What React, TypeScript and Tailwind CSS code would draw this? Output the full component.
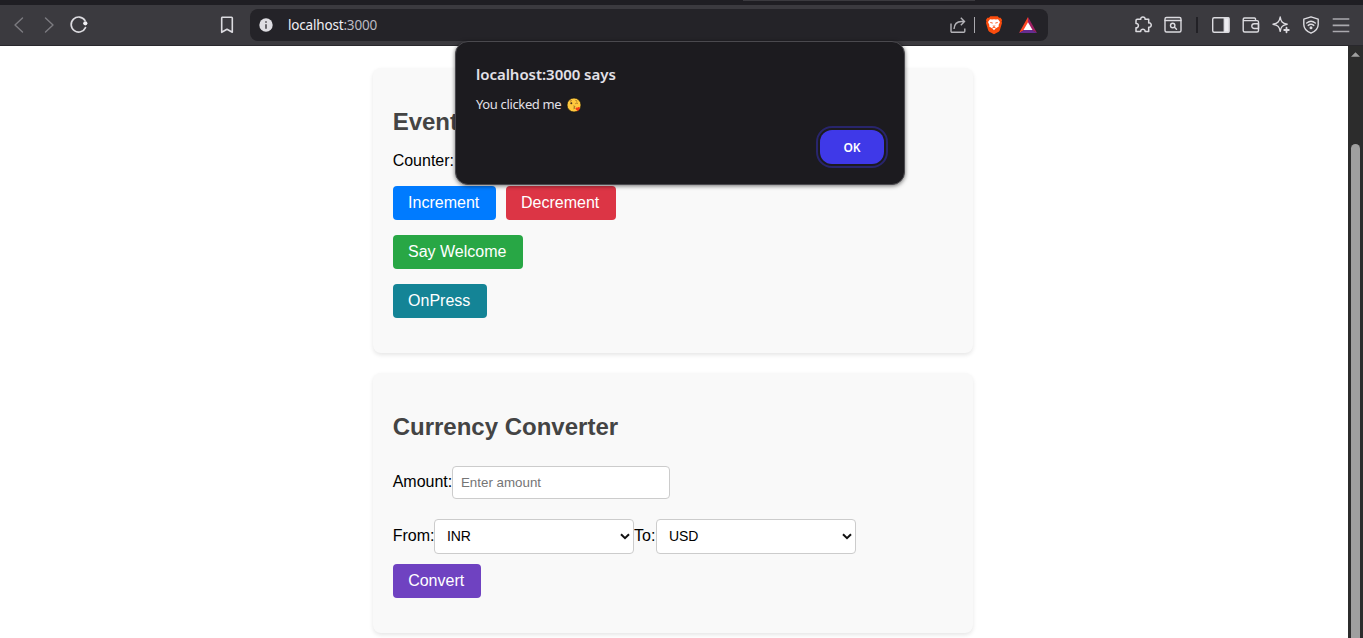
import React from "react";

const line = { fill: "none", stroke: "#dcdbe0", strokeWidth: 1.4, strokeLinecap: "round", strokeLinejoin: "round" } as const;

function Icon({ children, className = "" }: { children: React.ReactNode; className?: string }) {
  return (
    <svg viewBox="0 0 20 20" className={`size-5 shrink-0 ${className}`} {...line}>
      {children}
    </svg>
  );
}

function Toolbar() {
  return (
    <header className="h-[46px] shrink-0 border-b border-[#29282d] bg-[#3b3a3f] font-['Noto_Sans',sans-serif]">
      <div className="flex h-[5px] bg-[#1f1e23]">
        <div className="ml-[743px] h-px w-[232px] bg-[#3b3a3f]" />
      </div>
      <div className="flex h-10 items-center">
        <Icon className="ml-[9px]"><path stroke="#7c7b80" d="M13.5 3 6 10l7.500 7" /></Icon>
        <Icon className="ml-[10px]"><path stroke="#7c7b80" d="m6.500 3 7.500 7-7.500 7" /></Icon>
        <Icon className="ml-[10px]">
          <path strokeWidth="1.700" d="M16.500 12.600A7.500 7.500 0 1 1 16 5.500" />
          <circle cx="16.300" cy="8.300" r="2.100" fill="#f1f0f4" stroke="none" />
        </Icon>
        <Icon className="ml-[128px]"><path strokeWidth="1.600" d="M5 2.300h9.500a.8.8 0 0 1 .8.8v14.200L10 14.200l-5.300 3.100V3.100z" /></Icon>
        <div className="ml-[13px] flex h-8 w-[798px] items-center rounded-lg bg-[#242328]">
          <svg viewBox="0 0 14 14" className="ml-[9px] size-[14px]">
            <circle cx="7" cy="7" r="6.700" fill="#dedde2" />
            <path d="M7 3.300v1.500M7 6.200v4.500" stroke="#4b4a4f" strokeWidth="1.600" />
          </svg>
          <div className="ml-[15px] w-[100px] whitespace-nowrap text-[13.500px] leading-5 tracking-[-0.18px] text-[#f0eff4]">
            localhost<span className="text-[#bcbac2]">:3000</span>
          </div>
          <svg viewBox="0 0 18 18" className="ml-[561px] size-[18px]" fill="none" stroke="#b4b3b8" strokeWidth="1.400">
            <path d="M2 7.500v7.700a1 1 0 0 0 1 1h11.800a1 1 0 0 0 1-1V12.500" />
            <path d="M5 13c.3-4.800 3-7.500 7.500-7.500H15M11.800 1.800l3.700 3.700-3.700 3.700" />
          </svg>
          <div className="ml-[7px] h-4 w-px bg-[#aaa9ae]" />
          <svg viewBox="0 0 18 20" className="ml-[10px] h-5 w-[18px]">
            <path d="M5.300 1.200h7.400l1.300 1.500h1.600l1.500 2.300-.5 1.500.4 1.400-2.100 7.200a3 3 0 0 1-1.200 1.600L9 19.200l-4.700-2.500a3 3 0 0 1-1.200-1.600L1 7.900l.4-1.400L.9 5l1.500-2.300H4z" fill="#fb4c0d" />
            <path d="m5 4.200 2.200.4L9 4.300l1.800.3 2.200-.4L15 7l-1.400 3 .2 1.600-3.200 2L9 15.200l-1.600-1.600-3.200-2 .2-1.600L3 7z" fill="#fff" />
            <path d="m5.300 7.500 2.400.6M12.700 7.500l-2.400.6M7.800 10.800l1.200.6 1.200-.6M7.300 13l1.700-.8 1.700.8" fill="none" stroke="#fb4c0d" strokeWidth=".9" />
          </svg>
          <svg viewBox="0 0 18 16" className="ml-[16px] h-4 w-[18px]">
            <path d="M9 0 0 16l9-5z" fill="#ff4724" />
            <path d="m9 0 9 16-9-5z" fill="#9e1f63" />
            <path d="M0 16h18l-5-3H5z" fill="#662d91" />
            <path d="m9 5.200 4.500 7.800h-9z" fill="#fff" />
          </svg>
        </div>
        <Icon className="ml-[85px]">
          <path strokeWidth="1.500" d="M4.200 4.200h3.600c-.6-3 4.800-3 4.200 0h3.700v3.700c3.400-.5 3.400 4.900 0 4.300v4.300h-3.600c.2-3-4.600-3-4.400 0H3v-3.700c3.200.2 3.200-4.600 0-4.300V5.400a1.200 1.200 0 0 1 1.200-1.200z" />
        </Icon>
        <Icon className="ml-[10px]">
          <rect x="2" y="2.500" width="16" height="14.500" rx="1.500" />
          <path d="M2 5.500h16" />
          <circle cx="9.700" cy="10.500" r="2.200" />
          <path d="m11.500 12.300 2 2" />
        </Icon>
        <div className="ml-[13px] h-4 w-[2px] bg-[#222126]" />
        <Icon className="ml-[13px]">
          <rect x="1.700" y="2.700" width="16.200" height="14.500" rx="1.500" />
          <path d="M13.300 3h4.600v14h-4.600z" fill="#eeedf2" />
        </Icon>
        <Icon className="ml-[10px]">
          <path d="M14.500 5.500V4a1 1 0 0 0-1-1H3.500a1.300 1.300 0 0 0 0 2.600H16a1.500 1.500 0 0 1 1.500 1.500v8.400a1.500 1.500 0 0 1-1.500 1.500H3.700a1.500 1.500 0 0 1-1.500-1.500V4.500" />
          <path d="M17.500 8.700h-4.300a2.400 2.400 0 0 0 0 4.800h4.300z" />
        </Icon>
        <Icon className="ml-[10px]">
          <path d="M9.200 2c.7 4.700 2 6.200 7 7.200-4.700.9-6.300 2.500-7 7.200-.8-4.700-2.300-6.300-7.200-7.200C6.900 8.300 8.400 6.700 9.200 2z" />
          <path d="M15.500 12.500v5M13 15h5" stroke="#3b3a3f" strokeWidth="3.500" />
          <path d="M15.500 12.700v4.600M13.200 15h4.600" strokeWidth="1.800" />
        </Icon>
        <Icon className="ml-[10px]">
          <path d="m10 1.800 7.200 2.400v5.300c0 4-2.700 6.800-7.200 8.700-4.500-1.900-7.200-4.700-7.200-8.700V4.200z" />
          <path d="M5.700 8c2.500-2 6.100-2 8.600 0M7.200 10.400c1.700-1.300 3.900-1.300 5.600 0" />
          <circle cx="10" cy="12.700" r=".8" fill="#dcdbe0" />
        </Icon>
        <Icon className="ml-[10px]"><path stroke="#aaa9ae" strokeWidth="1.700" strokeLinecap="butt" d="M1.700 4h16.600M1.700 10.300h16.600M1.700 16.500h16.600" /></Icon>
      </div>
    </header>
  );
}

function Button({ className, children }: { className: string; children: React.ReactNode }) {
  return (
    <button className={`block h-[34px] rounded-[4px] pr-px pb-px text-center text-base leading-[18px] whitespace-nowrap text-white ${className}`}>
      {children}
    </button>
  );
}

function CurrencySelect({ value }: { value: string }) {
  return (
    <div className="relative flex h-[35px] w-[200px] items-center rounded-[4px] border border-[#ccc] bg-white pl-3 text-sm text-black">
      <span className="pb-px tracking-[-0.15px]">{value}</span>
      <svg viewBox="0 0 10 8" className="ml-auto mr-[3px] h-2 w-[10px]" fill="none" stroke="#111" strokeWidth="2">
        <path d="m1 1.200 4 4 4-4" />
      </svg>
    </div>
  );
}

function KissEmoji() {
  return (
    <svg viewBox="0 0 16 16" className="ml-[5px] size-4">
      <circle cx="8" cy="8" r="7" fill="#ffc83d" stroke="#15120c" strokeWidth=".7" />
      <circle cx="5.300" cy="6.300" r="1" fill="#49311d" />
      <path d="M9.300 6.800c.6-1 2.100-1 2.700 0M4 4.200l1.800-.7M9.500 3.500l1.700.7M7.500 8.900c1.700 0 1.500 1.300.3 1.400 1.200.1 1.200 1.500-.3 1.500" fill="none" stroke="#7a4c1c" strokeWidth=".7" />
      <path d="M11.800 14.200 9.700 12.200c-.7-1.200.6-2.300 1.700-1.400.6-1.300 2.800-1 2.600.7z" fill="#f03a17" />
    </svg>
  );
}

function AlertDialog() {
  return (
    <div role="dialog" className="absolute top-[41px] left-[455px] flex h-[144px] w-[450px] flex-col rounded-[13px] border border-[#4a494e] bg-[#1c1b1f] pt-[21px] pr-[20px] pl-[20px] font-['Noto_Sans',sans-serif] shadow-[0_1px_4px_rgba(0,0,0,0.55)]">
      <h1 className="text-[15px] leading-[22px] font-semibold tracking-[-0.04px] text-[#e3e1e8]">localhost:3000 says</h1>
      <div className="mt-[10px] flex h-5 items-center text-[13px] tracking-[-0.36px] text-[#e3e1e8]">
        You clicked me
        <KissEmoji />
      </div>
      <button className="mt-[15px] h-[34px] w-16 self-end rounded-[12px] bg-[#3f39e8] pt-px text-[12px] font-semibold text-white outline-2 outline-offset-2 outline-[#28256c]">OK</button>
    </div>
  );
}

export default function App() {
  return (
    <div className="relative flex h-[638px] w-[1363px] flex-col overflow-hidden bg-white">
      <Toolbar />
      <div className="flex min-h-0 flex-1">
        <main className="w-[1348px] overflow-hidden pt-[22px] font-['Liberation_Sans',Arial,sans-serif] text-base text-black">
          <section className="ml-[372.660px] h-[285px] w-[600.660px] rounded-lg bg-[#f9f9f9] px-5 pt-10 shadow-[0_2px_4px_rgba(0,0,0,0.1)]">
            <h2 className="text-2xl leading-7 font-bold text-[#444]">Event</h2>
            <p className="mt-[15px] leading-5">Counter:</p>
            <div className="mt-[15px] flex gap-[10px]">
              <Button className="w-[103px] bg-[#007bff]">Increment</Button>
              <Button className="w-[110px] bg-[#dc3545]">Decrement</Button>
            </div>
            <Button className="mt-[15px] w-[130px] bg-[#28a745]">Say Welcome</Button>
            <Button className="mt-[15px] w-[94px] bg-[#148496]">OnPress</Button>
          </section>
          <section className="mt-5 ml-[372.660px] h-[260px] w-[600.660px] rounded-lg bg-[#f9f9f9] px-5 pt-10 shadow-[0_2px_4px_rgba(0,0,0,0.1)]">
            <h2 className="text-2xl leading-7 font-bold text-[#444]">Currency Converter</h2>
            <div className="mt-[25px] flex">
              <label className="w-[59.340px] pt-[7px] leading-[18px] whitespace-nowrap">Amount:</label>
              <input placeholder="Enter amount" className="h-[33px] w-[218px] rounded-[4px] border border-[#ccc] bg-white px-2 text-[13.333px] outline-none placeholder:text-[#757575]" />
            </div>
            <div className="mt-5 flex">
              <label className="w-[41.340px] pt-[8px] leading-[18px] whitespace-nowrap">From:</label>
              <CurrencySelect value="INR" />
              <label className="w-[22px] pt-[8px] leading-[18px] whitespace-nowrap">To:</label>
              <CurrencySelect value="USD" />
            </div>
            <Button className="mt-[10px] w-[88px] bg-[#6f42c1]">Convert</Button>
          </section>
        </main>
        <div className="flex w-[15px] flex-col items-center bg-[#2c2c2c]">
          <svg viewBox="0 0 10 5" className="mt-[6px] h-[5px] w-[9px]"><path d="M0 5h10L5 0z" fill="#9f9f9f" /></svg>
          <div className="mt-[87px] w-[9px] flex-1 rounded-t-full bg-[#9f9f9f]" />
        </div>
      </div>
      <AlertDialog />
    </div>
  );
}
